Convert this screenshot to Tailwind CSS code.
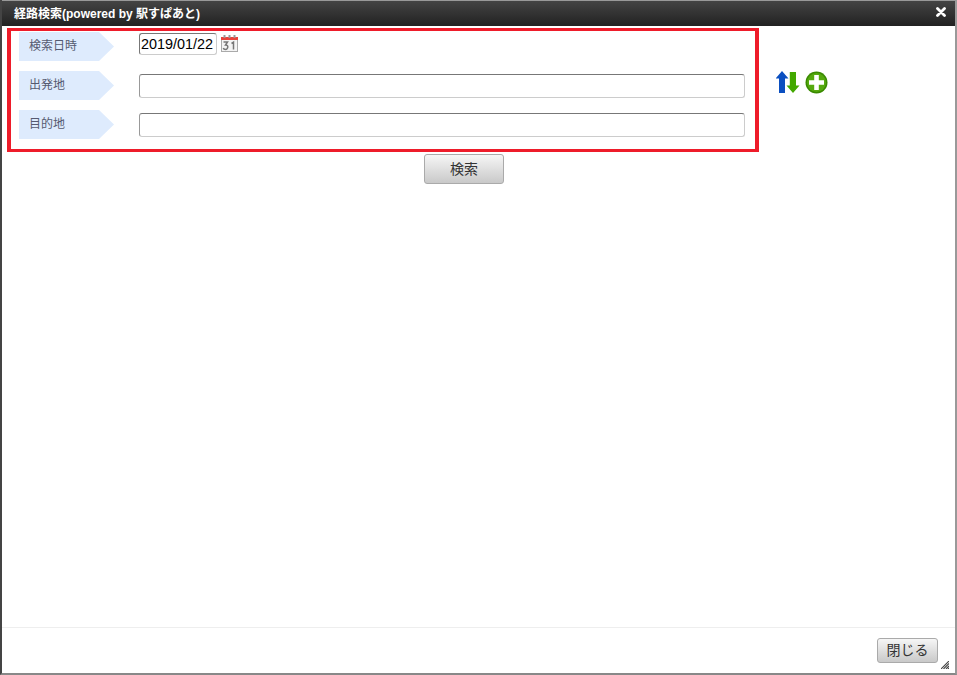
<!DOCTYPE html>
<html lang="ja"><head><meta charset="utf-8"><script src="https://cdn.jsdelivr.net/npm/@tailwindcss/browser@4"></script></head>
<body class="bg-white">
<div class="relative flex flex-col w-[957px] h-[675px] bg-white border-l-2 border-r-2 border-b-2 border-l-[#444] border-r-[#999] border-b-[#888] font-['Liberation_Sans','Noto_Sans_CJK_JP',sans-serif]">
  <header class="flex items-center justify-between h-[26px] shrink-0 pl-[12px] pr-[9px] border-t border-[#999] bg-gradient-to-b from-[#444] to-[#222] text-white text-[12px] font-bold">
    <span>経路検索(powered by 駅すぱあと)</span>
    <svg class="-mt-[3px]" width="10" height="10" viewBox="0 0 10 10"><path d="M1.500 1.500 8.500 8.500M8.500 1.500 1.500 8.500" stroke="#fff" stroke-width="2.800" stroke-linecap="round"/></svg>
  </header>
  <main class="flex-1 flex flex-col">
    <div class="flex items-center ml-[5px] mt-[2px]">
      <div class="w-[752px] h-[124px] border-x-4 border-y-[3px] border-[#ee1c2a] pl-[8px] pt-[1px] flex flex-col gap-[10px]">
        <div class="flex items-start h-[29px]">
          <div class="w-[95px] h-[29px] pl-[10px] pb-[2px] flex items-center text-[12px] text-[#555a70] bg-[#deebfd] [clip-path:polygon(0_0,80px_0,95px_50%,80px_100%,0_100%)]">検索日時</div>
          <div class="ml-[25px] mt-[1px] flex items-start">
            <input value="2019/01/22" class="w-[78px] h-[22px] px-[1px] text-[14.400px] text-black bg-white border border-t-[#777] border-l-[#777] border-r-[#ccc] border-b-[#ccc] rounded-[3px] outline-none">
            <svg class="ml-[4px] mt-[2px]" width="17" height="17" viewBox="0 0 17 17">
              <rect x="0.500" y="2.500" width="16" height="14" fill="#f4f4f4" stroke="#aaa"/>
              <rect x="0" y="2" width="17" height="3" fill="#e8443c"/>
              <rect x="2.500" y="0" width="2" height="3" fill="#999"/><rect x="7.500" y="0" width="2" height="3" fill="#999"/><rect x="12.500" y="0" width="2" height="3" fill="#999"/>
              <path d="M2.500 7h4L4.500 10c1.500 0 2.300.7 2.300 1.800S5.900 14.500 4.500 14.500 2.500 13.800 2.300 13M10.500 8.500l2-1.300v7.300" fill="none" stroke="#777" stroke-width="1.500"/>
            </svg>
          </div>
        </div>
        <div class="flex items-center h-[29px]">
          <div class="w-[95px] h-[29px] pl-[10px] pb-[1px] flex items-center text-[12px] text-[#555a70] bg-[#deebfd] [clip-path:polygon(0_0,80px_0,95px_50%,80px_100%,0_100%)]">出発地</div>
          <input class="ml-[25px] mt-[1px] w-[606px] h-[24px] bg-white border border-t-[#777] border-l-[#999] border-r-[#ccc] border-b-[#ccc] rounded-[3px] outline-none">
        </div>
        <div class="flex items-center h-[29px]">
          <div class="w-[95px] h-[29px] pl-[10px] pb-[1px] flex items-center text-[12px] text-[#555a70] bg-[#deebfd] [clip-path:polygon(0_0,80px_0,95px_50%,80px_100%,0_100%)]">目的地</div>
          <input class="ml-[25px] mt-[1px] w-[606px] h-[24px] bg-white border border-t-[#777] border-l-[#999] border-r-[#ccc] border-b-[#ccc] rounded-[3px] outline-none">
        </div>
      </div>
      <div class="flex items-center gap-[5px] ml-[17px] -mt-[15px]">
        <svg width="24" height="23" viewBox="0 0 24 23">
          <path d="M6 0 12.500 7.500H9V22H3V7.500H-.5Z" fill="#0b4fc0"/>
          <path d="M13.800 1H20V14.500H23.500L17 22 10.500 14.500H13.800Z" fill="#43a800"/>
        </svg>
        <svg width="23" height="23" viewBox="0 0 23 23">
          <circle cx="11.500" cy="11.500" r="11" fill="#3a8a00"/>
          <circle cx="11.500" cy="11.500" r="9.500" fill="#55a90e"/>
          <path d="M9.200 4h4.600v5.200H19v4.600h-5.200V19H9.200v-5.200H4V9.200h5.200Z" fill="#fff"/>
        </svg>
      </div>
    </div>
    <div class="flex justify-center pr-[29px] mt-[2px]">
      <button class="w-[80px] h-[30px] text-[14px] text-[#333] rounded-[3px] border border-[#aaa] bg-gradient-to-b from-[#f6f6f6] to-[#c9c9c9]">検索</button>
    </div>
  </main>
  <footer class="h-[46px] shrink-0 border-t border-[#eee] flex justify-end pt-[10px] pr-[17px]">
    <button class="w-[61px] h-[25px] text-[14px] text-[#333] rounded-[3px] border border-[#aaa] bg-gradient-to-b from-[#f6f6f6] to-[#c9c9c9]">閉じる</button>
  </footer>
  <svg class="absolute right-[6px] bottom-[4px]" width="8" height="8" viewBox="0 0 8 8"><path d="M0 8 8 0M2.500 8 8 2.500M5 8 8 5M7 8 8 7" stroke="#444" stroke-width="1.100"/></svg>
</div>
</body></html>
